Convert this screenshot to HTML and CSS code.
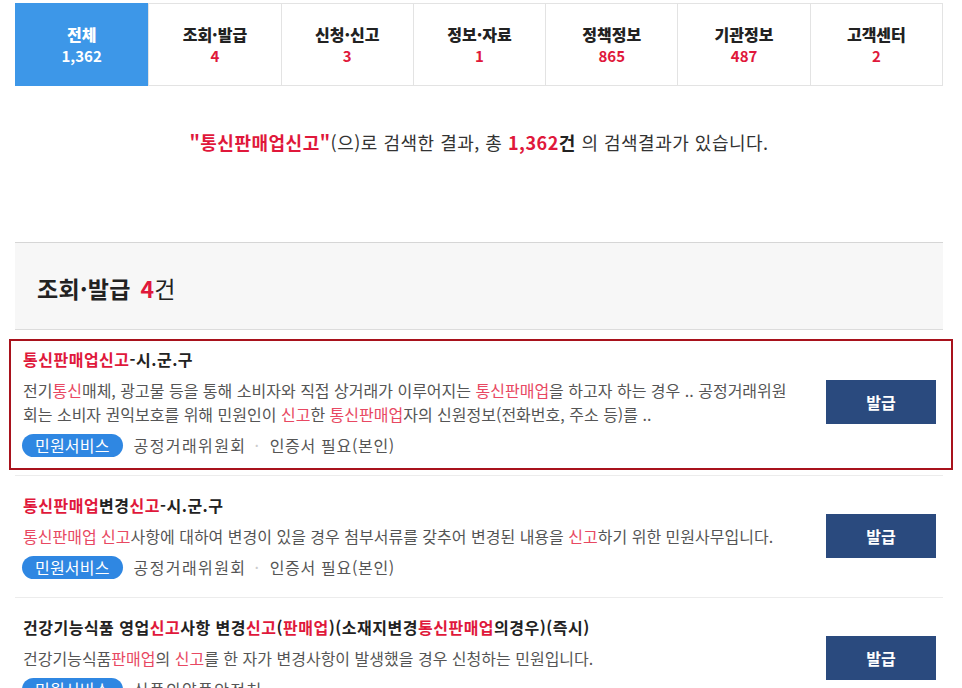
FILE: index.html
```html
<!DOCTYPE html>
<html lang="ko">
	<head>
		<meta charset="utf-8" />
		<link rel="stylesheet" href="styles.css">
		<title>통합검색</title>
	</head>
	<body>
		<div id="wrapper">
			<ul class="tabs">
				<li class="on"><strong>전체</strong><em>1,362</em></li>
				<li><strong>조회·발급</strong><em>4</em></li>
				<li><strong>신청·신고</strong><em>3</em></li>
				<li><strong>정보·자료</strong><em>1</em></li>
				<li><strong>정책정보</strong><em>865</em></li>
				<li><strong>기관정보</strong><em>487</em></li>
				<li><strong>고객센터</strong><em>2</em></li>
			</ul>

			<p class="summary">
				<b class="kw">"통신판매업신고"</b>(으)로 검색한 결과, 총 <b><span class="red">1,362</span>건</b> 의 검색결과가 있습니다.
			</p>

			<div class="sec-hd">
				<h2>조회·발급 <span class="red">4</span><span class="unit">건</span></h2>
			</div>

			<ul class="list">
				<li class="item focus">
					<div class="info">
						<h3><span class="hl">통신판매업신고</span>-시.군.구</h3>
						<p class="desc">전기<span class="hl">통신</span>매체, 광고물 등을 통해 소비자와 직접 상거래가 이루어지는 <span class="hl">통신판매업</span>을 하고자 하는 경우 .. 공정거래위원<br />회는 소비자 권익보호를 위해 민원인이 <span class="hl">신고</span>한 <span class="hl">통신판매업</span>자의 신원정보(전화번호, 주소 등)를 ..</p>
						<div class="tags">
							<span class="badge">민원서비스</span>
							<span class="org">공정거래위원회</span>
							<span class="dot">·</span>
							<span>인증서 필요(본인)</span>
						</div>
					</div>
					<a class="btn" href="#">발급</a>
				</li>
				<li class="item">
					<div class="info">
						<h3><span class="hl">통신판매업</span>변경<span class="hl">신고</span>-시.군.구</h3>
						<p class="desc"><span class="hl">통신판매업 신고</span>사항에 대하여 변경이 있을 경우 첨부서류를 갖추어 변경된 내용을 <span class="hl">신고</span>하기 위한 민원사무입니다.</p>
						<div class="tags">
							<span class="badge">민원서비스</span>
							<span class="org">공정거래위원회</span>
							<span class="dot">·</span>
							<span>인증서 필요(본인)</span>
						</div>
					</div>
					<a class="btn" href="#">발급</a>
				</li>
				<li class="item">
					<div class="info">
						<h3>건강기능식품 영업<span class="hl">신고</span>사항 변경<span class="hl">신고</span>(<span class="hl">판매업</span>)(소재지변경<span class="hl">통신판매업</span>의경우)(즉시)</h3>
						<p class="desc">건강기능식품<span class="hl">판매업</span>의 <span class="hl">신고</span>를 한 자가 변경사항이 발생했을 경우 신청하는 민원입니다.</p>
						<div class="tags">
							<span class="badge">민원서비스</span>
							<span class="org">식품의약품안전처</span>
						</div>
					</div>
					<a class="btn" href="#">발급</a>
				</li>
			</ul>
		</div>
	</body>
</html>
```

FILE: styles.css
```css
body,html{
	background-color:#fff;
	font-family:"Noto Sans CJK KR","Noto Sans",sans-serif;
	color:#222;
}
body,html,div,h2,h3,p,ul,li{
	padding:0;
	margin:0;
}
ul{
	list-style:none;
}
em{
	font-style:normal;
}
a{
	text-decoration:none;
}
.red{
	color:#e0183b;
}
#wrapper{
	width:928px;
	padding:3px 0 0 15px;
}

/* 탭 */
.tabs{
	display:grid;
	grid-template-columns:repeat(7,1fr);
	border:1px solid #e3e3e3;
	height:81px;
}
.tabs li{
	display:flex;
	flex-direction:column;
	align-items:center;
	justify-content:center;
	border-left:1px solid #e3e3e3;
	font-weight:bold;
	line-height:22px;
	color:#222;
}
.tabs li:first-child{
	border-left:0;
}
.tabs li strong{
	font-size:16px;
}
.tabs li em{
	font-size:15px;
	color:#e0183b;
}
.tabs li.on{
	background-color:#3d97e8;
	color:#fff;
	margin:-1px 0 -1px -1px;
}
.tabs li.on em{
	color:#fff;
}

/* 검색결과 요약 */
.summary{
	text-align:center;
	font-size:18px;
	line-height:24px;
	color:#333;
	padding:44px 0 0;
	height:112px;
	letter-spacing:0.5px;
}
.summary b{
	font-weight:bold;
	color:#222;
}
.summary .kw{
	color:#e0183b;
}

/* 분류 헤더 */
.sec-hd{
	background-color:#f7f7f7;
	border-top:1px solid #d6d6d6;
	border-bottom:1px solid #dcdcdc;
	height:86px;
	display:flex;
	align-items:center;
	padding-left:22px;
}
.sec-hd h2{
	font-size:23px;
	font-weight:bold;
	color:#222;
	letter-spacing:0.3px;
	padding-top:4px;
}
.sec-hd .red{
	margin-left:3px;
}
.sec-hd .unit{
	font-weight:normal;
}

/* 목록 */
.item{
	position:relative;
	display:flex;
	align-items:center;
	padding:16px 0 17px 8px;
	border-bottom:1px solid #ececec;
}
.item.focus:before{
	content:"";
	position:absolute;
	left:-6px;
	right:-10px;
	top:9px;
	bottom:5px;
	border:2px solid #a8121c;
}
.info{
	flex:1;
	min-width:0;
}
.info h3{
	font-size:16px;
	font-weight:bold;
	line-height:26px;
	color:#222;
	letter-spacing:0.5px;
}
.info h3 .hl{
	color:#e0183b;
}
.desc{
	margin-top:6px;
	font-size:16px;
	line-height:24px;
	color:#555;
}
.desc .hl{
	color:#e84862;
}
.tags{
	margin-top:6px;
	height:26px;
	display:flex;
	align-items:center;
	font-size:16px;
	color:#555;
	letter-spacing:0.7px;
}
.tags .org{
	letter-spacing:1.4px;
}
.badge{
	background-color:#2f87e2;
	color:#fff;
	border-radius:12px;
	height:23px;
	line-height:23px;
	padding:0 13px;
	margin:0 11px 0 -1px;
	letter-spacing:0.2px;
}
.dot{
	color:#ccc;
	margin:0 10px 0 8px;
}
.btn{
	width:110px;
	height:44px;
	line-height:44px;
	margin:0 7px 0 26px;
	background-color:#2a4a7e;
	color:#fff;
	font-size:16px;
	font-weight:bold;
	text-align:center;
}
```
